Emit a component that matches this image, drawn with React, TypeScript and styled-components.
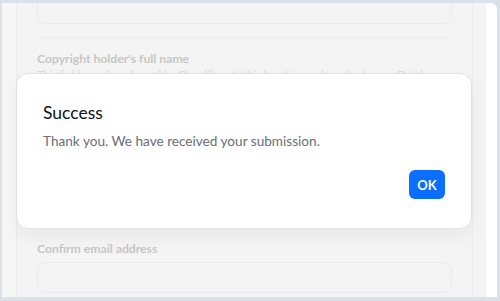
import React from "react";
import styled, { createGlobalStyle } from "styled-components";

const Global = createGlobalStyle`
  html, body { margin: 0; padding: 0; }
  body {
    background: #d9e2eb;
    font-family: Lato, "Noto Sans", sans-serif;
    width: 500px;
    height: 301px;
    overflow: hidden;
  }
`;

const Frame = styled.div`
  padding: 3px 3px 0 2px;
  height: 301px;
  box-sizing: border-box;
`;

const Window = styled.div`
  position: relative;
  height: 294px;
  display: flex;
  background: #f4f4f4;
  border-top-right-radius: 6px;
  overflow: hidden;
`;

const Gutter = styled.div`
  width: 14px;
  background: #f6f6f6;
  border-right: 1px solid #ececec;
`;

const Column = styled.div`
  width: 456px;
  border-right: 1px solid #ededed;
  padding: 0 20px;
  box-sizing: border-box;
  display: flex;
  flex-direction: column;
`;

const RightPad = styled.div`
  width: 13px;
  background: #f4f4f4;
`;

const Scrollbar = styled.div`
  width: 11px;
  background: #ffffff;
  border-top-right-radius: 6px;
`;

const Input = styled.div<{ $h: number }>`
  height: ${(p) => p.$h}px;
  border: 1px solid #ebebeb;
  border-radius: 8px;
  background: #f4f4f4;
  box-sizing: border-box;
`;

const TopInput = styled(Input)`
  margin-top: -20px;
`;

const Separator = styled.div`
  height: 1px;
  background: #ececec;
  margin-top: 13px;
`;

const Label = styled.div`
  font-size: 12.2px;
  font-weight: 700;
  color: #c6c6c6;
  margin-top: 12px;
  line-height: 17px;
`;

const Help = styled.div`
  font-size: 11px;
  color: #dadada;
  line-height: 14px;
  margin-top: 1px;
  white-space: nowrap;
`;

const Spacer = styled.div`
  height: 158px;
`;

const ConfirmLabel = styled(Label)`
  margin-top: 0;
  margin-bottom: 5px;
`;

const Modal = styled.div`
  position: absolute;
  left: 14px;
  top: 70px;
  width: 456px;
  height: 156px;
  box-sizing: border-box;
  background: #ffffff;
  border: 1px solid #e2e2e2;
  border-radius: 12px;
  box-shadow: 0 8px 18px rgba(0, 0, 0, 0.05);
  padding: 27px 26px 0 26px;
  display: flex;
  flex-direction: column;
`;

const Title = styled.div`
  font-size: 17.5px;
  font-weight: 400;
  color: #111111;
  line-height: 24px;
`;

const Body = styled.div`
  font-size: 13.6px;
  color: #6a6e73;
  line-height: 20px;
  margin-top: 6px;
`;

const Actions = styled.div`
  display: flex;
  justify-content: flex-end;
  margin-top: 19px;
`;

const OkButton = styled.button`
  width: 36px;
  height: 29px;
  border: none;
  border-radius: 6px;
  background: #0b6efd;
  color: #ffffff;
  font-family: Lato, sans-serif;
  font-size: 13px;
  font-weight: 700;
  padding: 0;
  cursor: pointer;
`;

export default function App() {
  return (
    <>
      <Global />
      <Frame>
        <Window>
          <Gutter />
          <Column>
            <TopInput $h={41} />
            <Separator />
            <Label>Copyright holder's full name</Label>
            <Help>
              This field may be released by Cloudflare to third parties such as the Lumen Database.
            </Help>
            <Spacer />
            <ConfirmLabel>Confirm email address</ConfirmLabel>
            <Input $h={31} />
          </Column>
          <RightPad />
          <Scrollbar />
          <Modal>
            <Title>Success</Title>
            <Body>Thank you. We have received your submission.</Body>
            <Actions>
              <OkButton>OK</OkButton>
            </Actions>
          </Modal>
        </Window>
      </Frame>
    </>
  );
}
